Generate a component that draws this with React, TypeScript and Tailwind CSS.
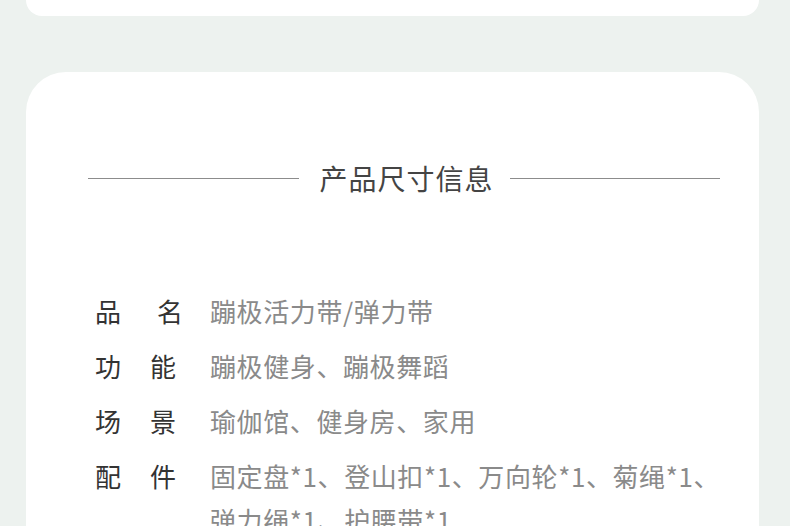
const rows = [
  { label: ["品", "名"], labelW: "w-[88px]", lines: ["蹦极活力带/弹力带"] },
  { label: ["功", "能"], labelW: "w-[81px]", lines: ["蹦极健身、蹦极舞蹈"] },
  { label: ["场", "景"], labelW: "w-[81px]", lines: ["瑜伽馆、健身房、家用"] },
  {
    label: ["配", "件"],
    labelW: "w-[81px]",
    lines: ["固定盘*1、登山扣*1、万向轮*1、菊绳*1、", "弹力绳*1、护腰带*1"],
  },
]

export default function App() {
  return (
    <div
      className="w-[790px] h-[526px] overflow-hidden bg-[#edf2ef]"
      style={{ fontFamily: '"Noto Sans CJK SC", "Noto Sans", sans-serif' }}
    >
      {/* previous card, only its bottom shows */}
      <div className="ml-[26px] w-[733px] h-[16px] bg-white rounded-b-[40px]" />

      <div className="ml-[26px] mt-[56px] w-[733px] h-[600px] bg-white rounded-t-[40px] pt-[90px]">
        <div className="flex items-center pl-[62px] pr-[39px]">
          <div className="flex-1 h-px bg-[#8c8c8c]" />
          <h2 className="pl-[21px] pr-[16px] text-[28px] leading-[32px] tracking-[1px] text-[#444]">
            产品尺寸信息
          </h2>
          <div className="flex-1 h-px bg-[#8c8c8c]" />
        </div>

        <div className="mt-[95px] pl-[69px] flex flex-col gap-[11px]">
          {rows.map((row) => (
            <div key={row.label.join("")} className="flex">
              <div className="w-[115px] shrink-0">
                <div className={`${row.labelW} flex justify-between text-[26px] leading-[44px] text-[#333]`}>
                  <span>{row.label[0]}</span>
                  <span>{row.label[1]}</span>
                </div>
              </div>
              <div className="text-[26px] leading-[44px] tracking-[0.6px] text-[#8a8a8a]">
                {row.lines.map((l) => (
                  <div key={l}>{l}</div>
                ))}
              </div>
            </div>
          ))}
        </div>
      </div>
    </div>
  )
}
